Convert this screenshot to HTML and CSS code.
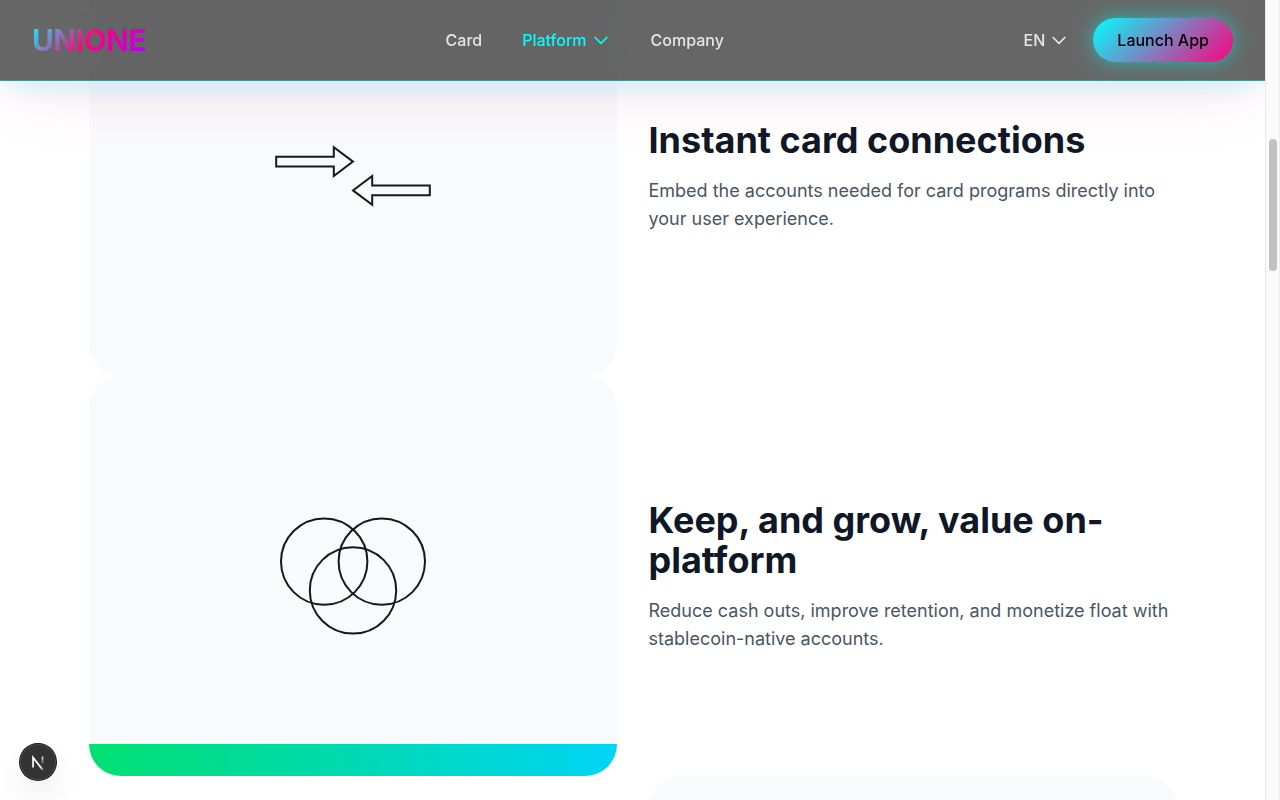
FILE: index.html
```html
<!DOCTYPE html>
<html lang="en">
<head>
<meta charset="utf-8">
<meta name="viewport" content="width=device-width, initial-scale=1">
<title>UNIONE</title>
<link rel="stylesheet" href="styles.css">
</head>
<body>
<div class="viewport">
  <div class="page">
    <header class="header">
      <a class="logo" href="#">UNIONE</a>
      <nav class="nav">
        <a class="nav-link" href="#card">Card</a>
        <button class="nav-link nav-link-active" type="button">Platform
          <svg class="chevron" viewBox="0 0 24 24" aria-hidden="true"><path d="M19 9l-7 7-7-7"/></svg>
        </button>
        <a class="nav-link" href="#company">Company</a>
      </nav>
      <div class="actions">
        <button class="nav-link" type="button">EN
          <svg class="chevron" viewBox="0 0 24 24" aria-hidden="true"><path d="M19 9l-7 7-7-7"/></svg>
        </button>
        <button class="launch" type="button">Launch App</button>
      </div>
    </header>
    <main class="features">
      <section class="feature">
        <div class="art">
          <svg class="drawing" viewBox="-96 -96 192 192" aria-hidden="true">
            <path d="M-76.8-19.2h57.6v-9.6L0-14.4-19.2 0v-9.6h-57.6z"/>
            <path d="M76.8 19.2H19.2v9.6L0 14.4 19.2 0v9.6h57.6z"/>
          </svg>
        </div>
        <div class="copy">
          <h2 class="title">Instant card connections</h2>
          <p class="text">Embed the accounts needed for card programs directly into your user experience.</p>
        </div>
      </section>
      <section class="feature">
        <div class="art">
          <svg class="drawing" viewBox="-96 -96 192 192" aria-hidden="true">
            <circle cx="-28.8" cy="-14.4" r="43.2"/>
            <circle cx="28.8" cy="-14.4" r="43.2"/>
            <circle cx="0" cy="14.4" r="43.2"/>
          </svg>
          <div class="accent"></div>
        </div>
        <div class="copy">
          <h2 class="title">Keep, and grow, value on-platform</h2>
          <p class="text">Reduce cash outs, improve retention, and monetize float with stablecoin-native accounts.</p>
        </div>
      </section>
      <section class="feature">
        <div class="copy"></div>
        <div class="art"></div>
      </section>
    </main>
  </div>
  <div class="scrollbar" aria-hidden="true"><div class="thumb"></div></div>
</div>
<button class="dev-badge" type="button" aria-label="Open developer tools">
  <svg class="dev-mark" viewBox="0 0 40 40" fill="none" aria-hidden="true">
    <defs>
      <linearGradient id="diag" x1="20" y1="20" x2="27" y2="29" gradientUnits="userSpaceOnUse"><stop stop-color="#fff"/><stop offset=".6" stop-color="#fff"/><stop offset="1" stop-color="#fff" stop-opacity="0"/></linearGradient>
      <linearGradient id="stem" x1="25" y1="13" x2="25" y2="24" gradientUnits="userSpaceOnUse"><stop stop-color="#fff"/><stop offset="1" stop-color="#fff" stop-opacity="0"/></linearGradient>
    </defs>
    <path d="M14.5 26V15l11 14" stroke="url(#diag)" stroke-width="1.9"/>
    <path d="M25 14v11" stroke="url(#stem)" stroke-width="1.9"/>
  </svg>
</button>
</body>
</html>
```
FILE: styles.css
```css
* {
  box-sizing: border-box;
}

body {
  margin: 0;
  background: #fff;
  color: #101828;
  font-family: Inter, "Liberation Sans", sans-serif;
}

.viewport {
  display: flex;
  height: 100vh;
  overflow: hidden;
}

.page {
  flex: 1;
  position: relative;
  height: 100vh;
  overflow: hidden;
}

.header {
  position: absolute;
  top: 0;
  left: 0;
  right: 0;
  z-index: 2;
  display: flex;
  align-items: center;
  justify-content: space-between;
  padding: 18px 32px;
  background: rgba(0, 0, 0, 0.6);
  border-bottom: 1px solid rgba(0, 255, 255, 0.3);
  backdrop-filter: blur(24px);
  box-shadow: 0 8px 32px -8px rgba(0, 255, 255, 0.3), 0 16px 64px -8px rgba(255, 0, 128, 0.14);
}

.logo {
  font-size: 30px;
  line-height: 36px;
  font-weight: 700;
  letter-spacing: -0.02em;
  text-decoration: none;
  color: transparent;
  background: linear-gradient(135deg, #00ffff 0%, #ff0080 50%, #aa00ff 100%);
  background-clip: text;
  -webkit-background-clip: text;
}

.nav {
  display: flex;
  align-items: center;
  gap: 40px;
}

.actions {
  display: flex;
  align-items: center;
  gap: 24px;
}

.nav-link {
  display: flex;
  align-items: center;
  gap: 4px;
  padding: 0;
  border: 0;
  background: none;
  color: #e5e5e5;
  font: 500 16px/24px Inter, "Liberation Sans", sans-serif;
  text-decoration: none;
  cursor: pointer;
}

.nav-link-active {
  color: #00ffff;
}

.chevron {
  width: 20px;
  height: 20px;
  fill: none;
  stroke: currentColor;
  stroke-width: 2;
  stroke-linecap: round;
  stroke-linejoin: round;
}

.launch {
  padding: 10px 24px;
  border: 0;
  border-radius: 22px;
  background: linear-gradient(135deg, #00ffff, #ff0080);
  box-shadow: 0 0 20px rgba(0, 255, 255, 0.5);
  color: #000;
  font: 500 16px/24px Inter, "Liberation Sans", sans-serif;
  cursor: pointer;
}

.features {
  max-width: 1152px;
  margin: -24px auto 0;
  padding: 0 32px;
}

.feature {
  display: grid;
  grid-template-columns: 1fr 1fr;
  column-gap: 32px;
  align-items: center;
}

.art {
  position: relative;
  display: flex;
  align-items: center;
  justify-content: center;
  height: 400px;
  overflow: hidden;
  border-radius: 32px;
  background: #f9fafc;
}

.drawing {
  width: 192px;
  height: 192px;
  fill: none;
  stroke: #18181b;
  stroke-width: 2;
}

.accent {
  position: absolute;
  right: 0;
  bottom: 0;
  left: 0;
  height: 32px;
  background: linear-gradient(90deg, #00e070, #00d4f5);
}

.title {
  margin: 0 0 17px;
  font-size: 36px;
  line-height: 40px;
  font-weight: 700;
}

.text {
  margin: 0;
  color: #4a5565;
  font-size: 18px;
  line-height: 28px;
}

.scrollbar {
  width: 15px;
  padding: 139px 2px 0 3px;
  background: #fafafa;
  border-left: 1px solid #e8e8e8;
  border-right: 1px solid #eeeeee;
}

.thumb {
  width: 8px;
  height: 132px;
  border-radius: 4px;
  background: #c1c1c1;
}

.dev-badge {
  position: fixed;
  left: 20px;
  bottom: 20px;
  z-index: 3;
  width: 36px;
  height: 36px;
  padding: 0;
  border: 0;
  border-radius: 50%;
  background: #333;
  box-shadow: inset 0 0 0 1px #4a4a4a, 0 0 0 1px #171717, 0 16px 32px -8px rgba(0, 0, 0, 0.24);
  cursor: pointer;
}

.dev-mark {
  display: block;
  width: 36px;
  height: 36px;
}
```
